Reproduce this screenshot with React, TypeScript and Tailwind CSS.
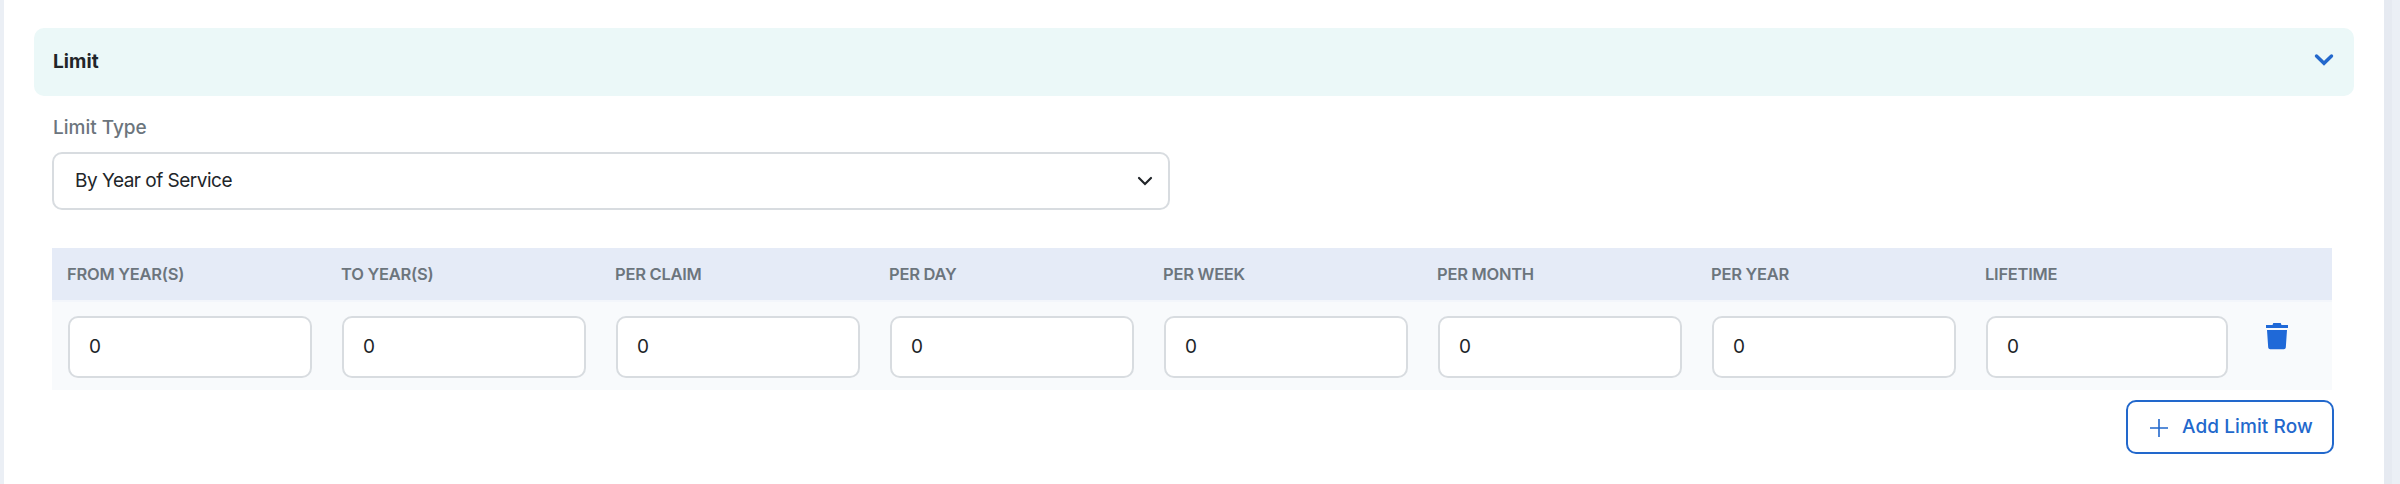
import React from "react";

const columns = [
  "From Year(s)",
  "To Year(s)",
  "Per Claim",
  "Per Day",
  "Per Week",
  "Per Month",
  "Per Year",
  "Lifetime",
];

const App = () => {
  return (
    <main className="flex h-[484px] w-[2400px] overflow-hidden bg-[#ebeff5] pl-1 font-['Inter',sans-serif] text-[#212529]">
      <section className="w-[2380px] bg-white pt-7">
        <div className="ml-[30px] flex h-[68px] w-[2320px] items-center justify-between rounded-[10px] bg-[#ebf8f8] pr-[20px] pl-[19px]">
          <h2 className="text-[19px] font-bold tracking-[0.1px]">Limit</h2>
          <svg width="20" height="14" viewBox="0 0 20 14" className="mb-1" fill="none">
            <path d="M2.500 3l7.500 7.300L17.500 3" stroke="#2268cc" strokeWidth="3.400" strokeLinecap="round" />
          </svg>
        </div>

        <div className="ml-12 w-[2280px] pt-[17px]">
          <label className="block h-[39px] pl-px text-[19px] leading-[30px] font-medium text-[#6c757d]">
            Limit Type
          </label>
          <div className="flex h-[58px] w-[1118px] items-center justify-between rounded-[10px] border-2 border-[#d8dce0] pr-[15px] pl-[21px]">
            <span className="text-[19px] tracking-[-0.5px]">By Year of Service</span>
            <svg width="16" height="10" viewBox="0 0 16 10" fill="none">
              <path d="M2 2l6 6 6-6" stroke="#212529" strokeWidth="2.200" strokeLinecap="round" />
            </svg>
          </div>

          <div className="mt-[38px] flex h-[52px] items-center bg-[#e5ebf7]">
            {columns.map((name) => (
              <div
                key={name}
                className="w-[274px] pl-[15px] text-[16.5px] font-semibold tracking-[-0.25px] text-[#6c757d] uppercase"
              >
                {name}
              </div>
            ))}
          </div>
          <div className="flex h-[90px] border-t-2 border-[#f3f6fb] bg-[#f8fafc] pt-[14px]">
            {columns.map((name) => (
              <div key={name} className="w-[274px] pl-4 last-of-type:pr-4">
                <div className="flex h-[62px] max-w-[244px] items-center rounded-[10px] border-2 border-[#d8dce0] bg-white pl-[19px] text-[19px]">
                  0
                </div>
              </div>
            ))}
            <svg width="24" height="27" viewBox="0 0 24 27" className="mt-[7px] ml-[21px]" fill="#1f69d8">
              <path d="M1 2h6.500l.8-2h7.400l.8 2H23v3H1z" />
              <path d="M2 7h20l-1.200 17.500a2 2 0 0 1-2 1.800H5.200a2 2 0 0 1-2-1.800z" />
            </svg>
          </div>

          <button className="mt-[10px] ml-[2074px] flex h-[54px] w-[208px] items-center rounded-[10px] border-2 border-[#2268cc] pl-[22px] text-[#2268cc]">
            <svg width="18" height="18" viewBox="0 0 18 18" className="mt-px" fill="none">
              <path d="M9 0v18M0 9h18" stroke="#2268cc" strokeWidth="1.600" />
            </svg>
            <span className="ml-[14px] text-[19px] font-medium tracking-[0.1px] whitespace-nowrap">
              Add Limit Row
            </span>
          </button>
        </div>
      </section>
      <div className="w-2 bg-[#e6eaf1]" />
    </main>
  );
};

export default App;
